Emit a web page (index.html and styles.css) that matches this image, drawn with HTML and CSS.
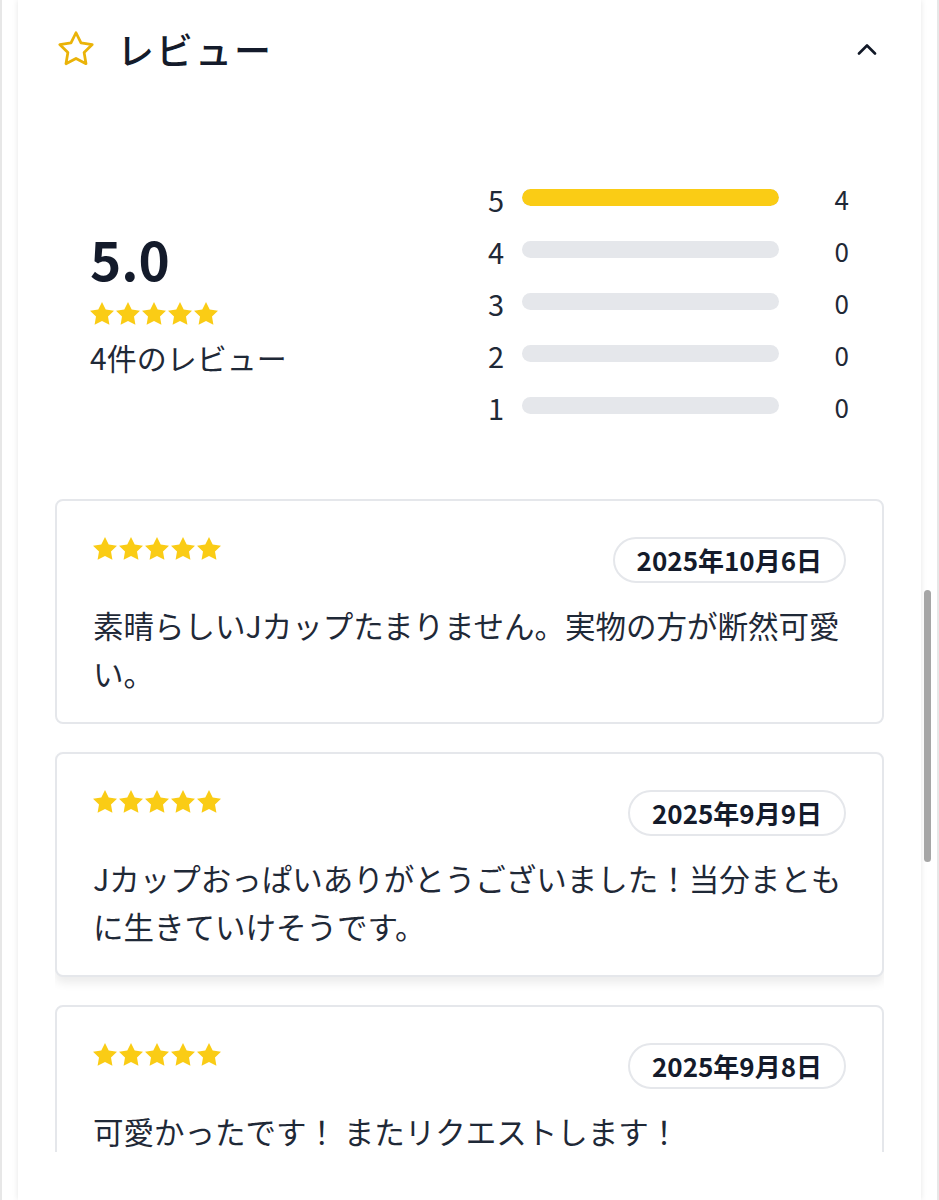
FILE: index.html
```html
<!DOCTYPE html>
<html lang="ja">
<head>
<meta charset="utf-8">
<title>レビュー</title>
<link rel="stylesheet" href="styles.css">
</head>
<body>
<div class="frame">
  <section class="panel">
    <header class="panel-head">
      <div class="head-left">
        <svg class="head-star" viewBox="1 1 22 22" width="38" height="38"><path d="M12 2.6l2.9 5.9 6.5.95-4.7 4.6 1.1 6.45L12 17.45l-5.8 3.05 1.1-6.45-4.7-4.6 6.5-.95z" fill="none" stroke="#eab308" stroke-width="1.6" stroke-linejoin="round"/></svg>
        <h2 class="title">レビュー</h2>
      </div>
      <svg class="chevron" viewBox="0 0 20 12" width="20" height="12"><path d="M2 10.5L10 2.5l8 8" fill="none" stroke="#111827" stroke-width="2.6" stroke-linecap="round" stroke-linejoin="round"/></svg>
    </header>

    <div class="summary">
      <div class="avg">
        <div class="avg-num">5.0</div>
        <div class="stars">
          <svg viewBox="2 2 20 20"><path d="M12 2l3.09 6.26L22 9.27l-5 4.87 1.18 6.88L12 17.770l-6.18 3.25L7 14.14 2 9.27l6.91-1.01z"/></svg>
          <svg viewBox="2 2 20 20"><path d="M12 2l3.09 6.26L22 9.27l-5 4.87 1.18 6.88L12 17.77l-6.18 3.25L7 14.14 2 9.27l6.91-1.01z"/></svg>
          <svg viewBox="2 2 20 20"><path d="M12 2l3.09 6.26L22 9.27l-5 4.87 1.18 6.88L12 17.77l-6.18 3.25L7 14.14 2 9.27l6.91-1.01z"/></svg>
          <svg viewBox="2 2 20 20"><path d="M12 2l3.09 6.26L22 9.27l-5 4.87 1.18 6.88L12 17.77l-6.18 3.25L7 14.14 2 9.27l6.91-1.01z"/></svg>
          <svg viewBox="2 2 20 20"><path d="M12 2l3.09 6.26L22 9.27l-5 4.87 1.18 6.88L12 17.77l-6.18 3.25L7 14.14 2 9.27l6.91-1.01z"/></svg>
        </div>
        <div class="avg-count">4件のレビュー</div>
      </div>
      <div class="dist">
        <div class="dist-row"><span class="d-num">5</span><span class="bar"><span class="fill" style="width:100%"></span></span><span class="d-count">4</span></div>
        <div class="dist-row"><span class="d-num">4</span><span class="bar"><span class="fill" style="width:0%"></span></span><span class="d-count">0</span></div>
        <div class="dist-row"><span class="d-num">3</span><span class="bar"><span class="fill" style="width:0%"></span></span><span class="d-count">0</span></div>
        <div class="dist-row"><span class="d-num">2</span><span class="bar"><span class="fill" style="width:0%"></span></span><span class="d-count">0</span></div>
        <div class="dist-row"><span class="d-num">1</span><span class="bar"><span class="fill" style="width:0%"></span></span><span class="d-count">0</span></div>
      </div>
    </div>

    <div class="review-list">
      <article class="card">
        <div class="card-head">
          <div class="stars">
            <svg viewBox="2 2 20 20"><path d="M12 2l3.09 6.26L22 9.27l-5 4.87 1.18 6.88L12 17.77l-6.18 3.25L7 14.14 2 9.27l6.91-1.01z"/></svg>
            <svg viewBox="2 2 20 20"><path d="M12 2l3.09 6.26L22 9.27l-5 4.87 1.18 6.88L12 17.77l-6.18 3.25L7 14.14 2 9.27l6.91-1.01z"/></svg>
            <svg viewBox="2 2 20 20"><path d="M12 2l3.09 6.26L22 9.27l-5 4.87 1.18 6.88L12 17.77l-6.18 3.25L7 14.14 2 9.27l6.91-1.01z"/></svg>
            <svg viewBox="2 2 20 20"><path d="M12 2l3.09 6.26L22 9.27l-5 4.87 1.18 6.88L12 17.77l-6.18 3.25L7 14.14 2 9.27l6.91-1.01z"/></svg>
            <svg viewBox="2 2 20 20"><path d="M12 2l3.09 6.26L22 9.27l-5 4.87 1.18 6.88L12 17.77l-6.18 3.25L7 14.14 2 9.27l6.91-1.01z"/></svg>
          </div>
          <span class="date">2025年10月6日</span>
        </div>
        <p class="body">素晴らしいJカップたまりません。実物の方が断然可愛い。</p>
      </article>

      <article class="card card-raised">
        <div class="card-head">
          <div class="stars">
            <svg viewBox="2 2 20 20"><path d="M12 2l3.09 6.26L22 9.27l-5 4.87 1.18 6.88L12 17.77l-6.18 3.25L7 14.14 2 9.27l6.91-1.01z"/></svg>
            <svg viewBox="2 2 20 20"><path d="M12 2l3.09 6.26L22 9.27l-5 4.87 1.18 6.88L12 17.77l-6.18 3.25L7 14.14 2 9.27l6.91-1.01z"/></svg>
            <svg viewBox="2 2 20 20"><path d="M12 2l3.09 6.26L22 9.27l-5 4.87 1.18 6.88L12 17.77l-6.18 3.25L7 14.14 2 9.27l6.91-1.01z"/></svg>
            <svg viewBox="2 2 20 20"><path d="M12 2l3.09 6.26L22 9.27l-5 4.87 1.18 6.88L12 17.77l-6.18 3.25L7 14.14 2 9.27l6.91-1.01z"/></svg>
            <svg viewBox="2 2 20 20"><path d="M12 2l3.09 6.26L22 9.27l-5 4.87 1.18 6.88L12 17.77l-6.18 3.25L7 14.14 2 9.27l6.91-1.01z"/></svg>
          </div>
          <span class="date">2025年9月9日</span>
        </div>
        <p class="body">Jカップおっぱいありがとうございました！当分まともに生きていけそうです。</p>
      </article>

      <article class="card">
        <div class="card-head">
          <div class="stars">
            <svg viewBox="2 2 20 20"><path d="M12 2l3.09 6.26L22 9.27l-5 4.87 1.18 6.88L12 17.77l-6.18 3.25L7 14.14 2 9.27l6.91-1.01z"/></svg>
            <svg viewBox="2 2 20 20"><path d="M12 2l3.09 6.26L22 9.27l-5 4.87 1.18 6.88L12 17.77l-6.18 3.25L7 14.14 2 9.27l6.91-1.01z"/></svg>
            <svg viewBox="2 2 20 20"><path d="M12 2l3.09 6.26L22 9.27l-5 4.87 1.18 6.88L12 17.77l-6.18 3.25L7 14.14 2 9.27l6.91-1.01z"/></svg>
            <svg viewBox="2 2 20 20"><path d="M12 2l3.09 6.26L22 9.27l-5 4.87 1.18 6.88L12 17.77l-6.18 3.25L7 14.14 2 9.27l6.91-1.01z"/></svg>
            <svg viewBox="2 2 20 20"><path d="M12 2l3.09 6.26L22 9.27l-5 4.87 1.18 6.88L12 17.77l-6.18 3.25L7 14.14 2 9.27l6.91-1.01z"/></svg>
          </div>
          <span class="date">2025年9月8日</span>
        </div>
        <p class="body">可愛かったです！ またリクエストします！</p>
      </article>
    </div>
  </section>
  <div class="scroll-thumb"></div>
</div>
</body>
</html>
```

FILE: styles.css
```css
* { box-sizing: border-box; }
html, body { margin: 0; padding: 0; background: #fff; }
body {
  font-family: "Noto Sans CJK JP", "Noto Sans", sans-serif;
  color: #1b2333;
}
.frame {
  position: relative;
  height: 1200px;
  overflow: hidden;
  border-left: 2px solid #e7e7e7;
  border-right: 2px solid #e7e7e7;
  padding: 0 16px;
}
.panel {
  background: #fff;
  min-height: 1200px;
  padding: 0 37px;
  box-shadow: 0 0 6px rgba(0, 0, 0, 0.1);
}
.panel-head {
  display: flex;
  align-items: center;
  justify-content: space-between;
  padding-top: 30px;
  height: 68px;
}
.head-left {
  display: flex;
  align-items: center;
  gap: 22px;
  padding-left: 2px;
}
.head-star { display: block; }
.title {
  margin: 0;
  font-size: 37px;
  line-height: 38px;
  font-weight: 500;
  color: #141b2b;
  letter-spacing: 2px;
}
.chevron { display: block; margin-right: 7px; }

.summary {
  display: flex;
  margin-top: 103px;
}
.avg {
  width: 433px;
  padding-left: 35px;
  padding-top: 57px;
}
.avg-num {
  font-size: 53px;
  line-height: 60px;
  font-weight: 700;
  color: #141b2b;
}
.stars {
  display: flex;
  gap: 2px;
}
.stars svg {
  width: 24px;
  height: 24px;
  display: block;
  fill: #facc15;
}
.avg .stars { margin-top: 14px; }
.avg-count {
  margin-top: 11px;
  font-size: 30px;
  line-height: 40px;
  color: #1f2937;
}
.dist {
  flex: 1;
  padding-right: 35px;
}
.dist-row {
  display: flex;
  align-items: center;
  height: 52px;
}
.d-num {
  width: 34px;
  font-size: 29px;
  line-height: 52px;
  color: #1f2937;
  padding-top: 3px;
}
.bar {
  width: 257px;
  height: 17px;
  border-radius: 9px;
  background: #e5e7eb;
  overflow: hidden;
}
.fill {
  display: block;
  height: 100%;
  background: #facc15;
  border-radius: 9px;
}
.d-count {
  flex: 1;
  text-align: right;
  font-size: 26px;
  line-height: 52px;
  color: #1f2937;
  padding-top: 3px;
}

.review-list {
  margin-top: 68px;
  height: 653px;
  overflow: hidden;
  display: flex;
  flex-direction: column;
  gap: 28px;
}
.card {
  flex: none;
  border: 2px solid #e5e7eb;
  border-radius: 8px;
  padding: 36px 36px 25px;
  background: #fff;
}
.card-raised {
  box-shadow: 0 6px 10px rgba(0, 0, 0, 0.08);
}
.card-head {
  display: flex;
  justify-content: space-between;
  align-items: flex-start;
}
.date {
  border: 2px solid #e5e7eb;
  border-radius: 24px;
  padding: 4px 22px;
  font-size: 26px;
  line-height: 34px;
  font-weight: 700;
  color: #141b2b;
  white-space: nowrap;
}
.body {
  margin: 18px 0 0;
  font-size: 30.5px;
  line-height: 48px;
  color: #1f2937;
}
.scroll-thumb {
  position: absolute;
  left: 922px;
  top: 590px;
  width: 7px;
  height: 272px;
  border-radius: 4px;
  background: #a6a6a6;
}
```
